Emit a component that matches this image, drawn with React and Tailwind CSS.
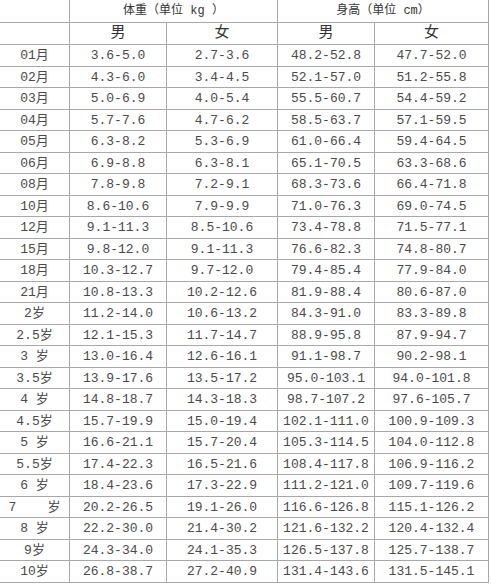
const rows = [
    ['01月', '3.6-5.0', '2.7-3.6', '48.2-52.8', '47.7-52.0'],
    ['02月', '4.3-6.0', '3.4-4.5', '52.1-57.0', '51.2-55.8'],
    ['03月', '5.0-6.9', '4.0-5.4', '55.5-60.7', '54.4-59.2'],
    ['04月', '5.7-7.6', '4.7-6.2', '58.5-63.7', '57.1-59.5'],
    ['05月', '6.3-8.2', '5.3-6.9', '61.0-66.4', '59.4-64.5'],
    ['06月', '6.9-8.8', '6.3-8.1', '65.1-70.5', '63.3-68.6'],
    ['08月', '7.8-9.8', '7.2-9.1', '68.3-73.6', '66.4-71.8'],
    ['10月', '8.6-10.6', '7.9-9.9', '71.0-76.3', '69.0-74.5'],
    ['12月', '9.1-11.3', '8.5-10.6', '73.4-78.8', '71.5-77.1'],
    ['15月', '9.8-12.0', '9.1-11.3', '76.6-82.3', '74.8-80.7'],
    ['18月', '10.3-12.7', '9.7-12.0', '79.4-85.4', '77.9-84.0'],
    ['21月', '10.8-13.3', '10.2-12.6', '81.9-88.4', '80.6-87.0'],
    ['2岁', '11.2-14.0', '10.6-13.2', '84.3-91.0', '83.3-89.8'],
    ['2.5岁', '12.1-15.3', '11.7-14.7', '88.9-95.8', '87.9-94.7'],
    ['3 岁', '13.0-16.4', '12.6-16.1', '91.1-98.7', '90.2-98.1'],
    ['3.5岁', '13.9-17.6', '13.5-17.2', '95.0-103.1', '94.0-101.8'],
    ['4 岁', '14.8-18.7', '14.3-18.3', '98.7-107.2', '97.6-105.7'],
    ['4.5岁', '15.7-19.9', '15.0-19.4', '102.1-111.0', '100.9-109.3'],
    ['5 岁', '16.6-21.1', '15.7-20.4', '105.3-114.5', '104.0-112.8'],
    ['5.5岁', '17.4-22.3', '16.5-21.6', '108.4-117.8', '106.9-116.2'],
    ['6 岁', '18.4-23.6', '17.3-22.9', '111.2-121.0', '109.7-119.6'],
    ['7    岁', '20.2-26.5', '19.1-26.0', '116.6-126.8', '115.1-126.2'],
    ['8 岁', '22.2-30.0', '21.4-30.2', '121.6-132.2', '120.4-132.4'],
    ['9岁', '24.3-34.0', '24.1-35.3', '126.5-137.8', '125.7-138.7'],
    ['10岁', '26.8-38.7', '27.2-40.9', '131.4-143.6', '131.5-145.1'],
];

const cols = 'grid grid-cols-[70px_97px_111px_97px_114px]';
const cell = 'flex items-center justify-center border-r border-b border-[#a8a8a8] whitespace-pre';

export default function App() {
    return (
        <div className="w-[491px] h-[585px] bg-white text-[#4a4a4a] font-['Liberation_Mono','Noto_Sans_CJK_SC',monospace] text-[13px] leading-none">
            <div className="w-[489px]">
                {/* header: units */}
                <div className="grid grid-cols-[70px_208px_211px] h-[23px] text-[#333] text-[12px]">
                    <div className={cell}></div>
                    <div className={cell}>体重（单位 kg ）</div>
                    <div className={cell}>身高（单位 cm）</div>
                </div>
                {/* header: gender */}
                <div className={`${cols} h-[22px] text-[#333] text-[15px]`}>
                    <div className={cell}></div>
                    <div className={cell}>男</div>
                    <div className={cell}>女</div>
                    <div className={cell}>男</div>
                    <div className={cell}>女</div>
                </div>
                {rows.map((r, i) => (
                    <div key={i} className={`${cols} ${i % 2 === 0 ? 'h-[22px]' : 'h-[21px]'}`}>
                        {r.map((v, j) => (
                            <div key={j} className={cell}>{v}</div>
                        ))}
                    </div>
                ))}
            </div>
        </div>
    );
}
